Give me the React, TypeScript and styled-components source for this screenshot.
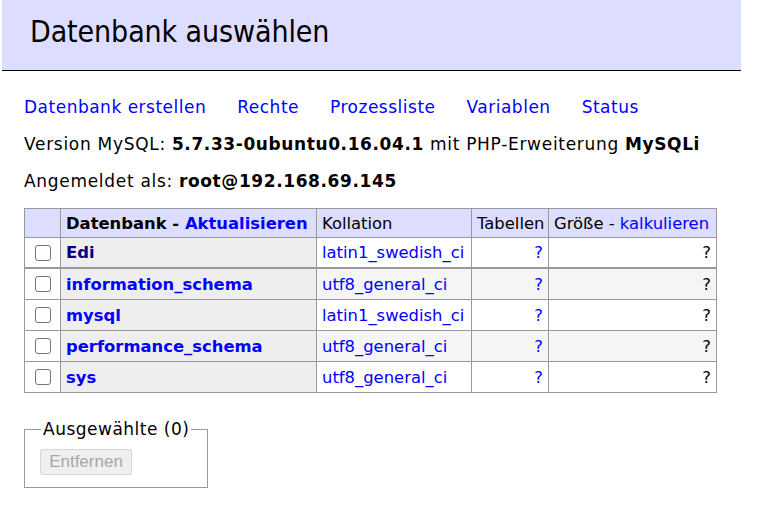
import React from "react";
import styled, { createGlobalStyle } from "styled-components";

const Global = createGlobalStyle`
  html, body { margin: 0; padding: 0; background: #fff; }
  body { font-family: "DejaVu Sans", Verdana, sans-serif; font-size: 17px; letter-spacing: 0.5px; color: #000; }
`;

const Page = styled.div`
  padding: 0 0 0 2px;
`;

const Header = styled.h2`
  margin: 0;
  width: 739px;
  box-sizing: border-box;
  height: 71px;
  padding: 14px 0 0 28px;
  background: #ddf;
  border-bottom: 1px solid #000;
  font-weight: normal;
  font-size: 30px;
  line-height: 36px;
  letter-spacing: -0.1px;
  font-family: "DejaVu Sans Condensed", "DejaVu Sans", sans-serif;
`;

const Content = styled.div`
  padding: 26px 0 0 22px;
`;

const Links = styled.p`
  margin: 0;
  display: flex;
  gap: 31px;
  line-height: 20px;
`;

const Link = styled.a<{ $visited?: boolean }>`
  color: ${(p) => (p.$visited ? "navy" : "blue")};
  text-decoration: none;
  cursor: pointer;
`;

const Line = styled.p`
  margin: 17px 0 0;
  line-height: 20px;
  letter-spacing: 0.7px;
`;

const Strong = styled.b`
  letter-spacing: 0.6px;
`;

const Table = styled.table`
  margin-top: 17px;
  border-collapse: collapse;
  border: 1px solid #999;
  width: 692px;
  table-layout: fixed;
  font-size: 16.4px;
  letter-spacing: 0;
`;

const Col = styled.col<{ $w: number }>`
  width: ${(p) => p.$w}px;
`;

const HeadCell = styled.td<{ $th?: boolean }>`
  background: #ddf;
  border: 1px solid #999;
  height: 28px;
  padding: 0 5px;
  font-weight: ${(p) => (p.$th ? "bold" : "normal")};
  white-space: nowrap;
  overflow: hidden;
`;

const Row = styled.tr<{ $odd: boolean; $thick?: boolean }>`
  background: ${(p) => (p.$odd ? "#f5f5f5" : "#fff")};
  border-bottom: ${(p) => (p.$thick ? "2px" : "1px")} solid #999;
`;

const CheckCell = styled.td<{ $h: number }>`
  background: #fff;
  border: 1px solid #999;
  padding: 0 0 0 10px;
  height: ${(p) => p.$h}px;
`;

const NameCell = styled.th`
  background: #eee;
  border: 1px solid #999;
  text-align: left;
  padding: 0 5px;
  font-weight: bold;
`;

const Cell = styled.td<{ $right?: boolean }>`
  border: 1px solid #999;
  padding: 0 5px;
  text-align: ${(p) => (p.$right ? "right" : "left")};
  white-space: nowrap;
  overflow: hidden;
`;

const Box = styled.span`
  display: block;
  width: 16px;
  height: 16px;
  border: 1px solid #767676;
  border-radius: 3px;
  background: #fff;
  box-sizing: border-box;
`;

const Fieldset = styled.fieldset`
  margin: 25px 0 0;
  width: 184px;
  box-sizing: border-box;
  height: 70px;
  border: 1px solid #999;
  padding: 0 0 0 15px;
  min-width: 0;
`;

const Legend = styled.legend`
  padding: 0 2px;
  margin-left: 1px;
  line-height: 22px;
`;

const Button = styled.button`
  font-family: "Liberation Sans", Arial, sans-serif;
  font-size: 17px;
  letter-spacing: 0;
  color: #a7a7a7;
  background: #efefef;
  border: 1px solid #d8d8d8;
  border-radius: 2px;
  width: 92px;
  height: 26px;
  padding: 0;
  margin-top: 9px;
`;

const dbs = [
  { name: "Edi", coll: "latin1_swedish_ci", visited: true },
  { name: "information_schema", coll: "utf8_general_ci" },
  { name: "mysql", coll: "latin1_swedish_ci" },
  { name: "performance_schema", coll: "utf8_general_ci" },
  { name: "sys", coll: "utf8_general_ci" },
];

export default function App() {
  return (
    <Page>
      <Global />
      <Header>Datenbank auswählen</Header>
      <Content>
        <Links>
          <Link>Datenbank erstellen</Link>
          <Link>Rechte</Link>
          <Link>Prozessliste</Link>
          <Link>Variablen</Link>
          <Link>Status</Link>
        </Links>
        <Line>
          Version MySQL: <Strong>5.7.33-0ubuntu0.16.04.1</Strong> mit PHP-Erweiterung{" "}
          <Strong>MySQLi</Strong>
        </Line>
        <Line>
          Angemeldet als: <Strong>root@192.168.69.145</Strong>
        </Line>
        <Table>
          <colgroup>
            <Col $w={36} />
            <Col $w={256} />
            <Col $w={155} />
            <Col $w={77} />
            <Col $w={168} />
          </colgroup>
          <thead>
            <tr>
              <HeadCell />
              <HeadCell $th>
                Datenbank - <Link>Aktualisieren</Link>
              </HeadCell>
              <HeadCell>Kollation</HeadCell>
              <HeadCell>Tabellen</HeadCell>
              <HeadCell>
                Größe - <Link>kalkulieren</Link>
              </HeadCell>
            </tr>
          </thead>
          <tbody>
            {dbs.map((d, i) => (
              <Row key={d.name} $odd={i % 2 === 1} $thick={i === 0}>
                <CheckCell $h={i === 0 ? 29 : 30}>
                  <Box />
                </CheckCell>
                <NameCell>
                  <Link $visited={d.visited}>{d.name}</Link>
                </NameCell>
                <Cell>
                  <Link>{d.coll}</Link>
                </Cell>
                <Cell $right>
                  <Link>?</Link>
                </Cell>
                <Cell $right>?</Cell>
              </Row>
            ))}
          </tbody>
        </Table>
        <Fieldset>
          <Legend>Ausgewählte (0)</Legend>
          <Button disabled>Entfernen</Button>
        </Fieldset>
      </Content>
    </Page>
  );
}
